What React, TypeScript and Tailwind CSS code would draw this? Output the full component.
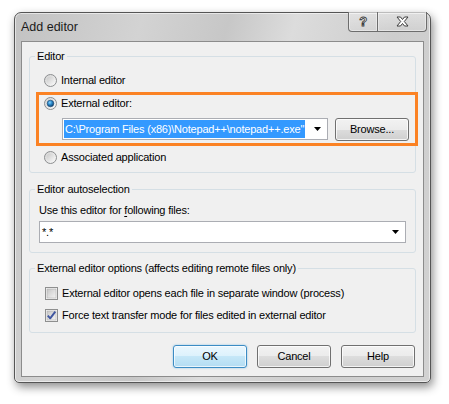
import { useId } from 'react';

function Radio({ checked = false }: { checked?: boolean }) {
    const id = useId();
    return (
        <svg width="13" height="13" viewBox="0 0 13 13" className="shrink-0">
            <defs>
                <linearGradient id={`${id}o`} x1="0" y1="0" x2="1" y2="1">
                    <stop offset="0" stopColor="#d2d2d2" />
                    <stop offset="1" stopColor="#fbfbfb" />
                </linearGradient>
                <linearGradient id={`${id}i`} x1="0" y1="0" x2="1" y2="1">
                    <stop offset="0" stopColor="#c9c9c9" />
                    <stop offset="1" stopColor="#f7f7f7" />
                </linearGradient>
                <radialGradient id={`${id}d`} cx="0.4" cy="0.35" r="0.65">
                    <stop offset="0" stopColor="#8fd3fb" />
                    <stop offset="0.45" stopColor="#2f8fd0" />
                    <stop offset="1" stopColor="#0d3f6e" />
                </radialGradient>
            </defs>
            <circle cx="6.5" cy="6.5" r="6" fill={`url(#${id}o)`} stroke="#8c8e90" />
            <circle cx="6.5" cy="6.5" r="4" fill={`url(#${id}i)`} />
            {checked && <circle cx="6.5" cy="6.5" r="3.3" fill={`url(#${id}d)`} stroke="#1c4a74" strokeWidth="0.6" />}
        </svg>
    );
}

function Checkbox({ checked = false }: { checked?: boolean }) {
    const id = useId();
    return (
        <svg width="13" height="13" viewBox="0 0 13 13" className="shrink-0">
            <defs>
                <linearGradient id={`${id}g`} x1="0" y1="0" x2="1" y2="1">
                    <stop offset="0" stopColor="#c6c6c6" />
                    <stop offset="1" stopColor="#f4f4f4" />
                </linearGradient>
            </defs>
            <rect x="0.5" y="0.5" width="12" height="12" fill="#f4f4f4" stroke="#8e8f8f" />
            <rect x="2" y="2" width="9" height="9" fill={`url(#${id}g)`} stroke="#a9a9a9" strokeWidth="0.5" />
            {checked && (
                <path d="M2.8 6.6 L5.2 9.3 L10.3 2.6" fill="none" stroke="#3f56a0" strokeWidth="1.9" strokeLinejoin="round" />
            )}
        </svg>
    );
}

function DropArrow() {
    return (
        <svg width="7" height="4" viewBox="0 0 7 4" className="shrink-0">
            <path d="M0 0 H7 L3.5 4 Z" fill="#000" />
        </svg>
    );
}

function Btn({ label, primary = false }: { label: string; primary?: boolean }) {
    return (
        <div
            className={`flex h-[23px] w-[74px] items-center justify-center rounded-[3px] border text-black ${
                primary
                    ? 'border-[#3c8cc4] bg-[linear-gradient(#eaf7fe_0%,#dcf1fc_50%,#c5e7f8_50%,#b3dcf2_100%)] shadow-[inset_0_0_0_1px_rgba(255,255,255,0.7),0_0_2px_rgba(60,160,220,0.6)]'
                    : 'border-[#707070] bg-[linear-gradient(#f2f2f2_0%,#ebebeb_50%,#dddddd_50%,#cfcfcf_100%)] shadow-[inset_0_0_0_1px_rgba(255,255,255,0.75)]'
            }`}
        >
            {label}
        </div>
    );
}

function Legend({ children }: { children: React.ReactNode }) {
    return <legend className="ml-[5px] px-[2px] leading-[13px] text-black">{children}</legend>;
}

export default function App() {
    return (
        <div className="h-[404px] w-[449px] bg-white pl-[14px] pt-[12px] font-['Liberation_Sans',Arial,sans-serif] text-[11px] tracking-[-0.2px]">
            {/* Window frame */}
            <div className="flex h-[371px] w-[417px] flex-col rounded-t-[7px] rounded-b-[5px] border border-[#555] bg-[linear-gradient(105deg,#c2c2c2_0%,#d3d3d3_25%,#c7c7c7_42%,#dcdcdc_55%,#cdcdcd_75%,#d2d2d2_100%)] px-[6px] pb-[5px] shadow-[inset_0_0_0_1px_rgba(255,255,255,0.55),2px_4px_10px_rgba(0,0,0,0.45)]">
                {/* Title bar */}
                <div className="flex h-[28px] shrink-0 items-start justify-between">
                    <span className="self-center text-[12.5px] tracking-normal text-[#1a1a1a]">Add editor</span>
                    <div className="-mr-[3px] -mt-[1px] flex h-[20px]">
                        <div className="flex w-[30px] items-center justify-center rounded-bl-[4px] border border-t-0 border-[#6d6d6d] bg-[linear-gradient(rgba(255,255,255,0.35),rgba(255,255,255,0.05))] shadow-[inset_0_0_0_1px_rgba(255,255,255,0.4)]">
                            <span className="text-[13px] font-bold leading-none text-white [-webkit-text-stroke:0.9px_#3c3c3c]">?</span>
                        </div>
                        <div className="-ml-[1px] flex w-[50px] items-center justify-center rounded-br-[4px] border border-t-0 border-[#6d6d6d] bg-[linear-gradient(rgba(255,255,255,0.35),rgba(255,255,255,0.05))] shadow-[inset_0_0_0_1px_rgba(255,255,255,0.4)]">
                            <svg width="13" height="11" viewBox="0 0 13 11">
                                <path
                                    d="M1 1 H4.5 L6.5 3.5 L8.5 1 H12 L8.3 5.5 L12 10 H8.5 L6.5 7.5 L4.5 10 H1 L4.7 5.5 Z"
                                    fill="#fff"
                                    stroke="#3c3c3c"
                                    strokeWidth="1"
                                    strokeLinejoin="round"
                                />
                            </svg>
                        </div>
                    </div>
                </div>

                {/* Client area */}
                <div className="flex flex-1 flex-col border border-[#8c8c8c] bg-[#f0f0f0] px-[7px] pt-[8px] text-black">
                    {/* Editor group */}
                    <fieldset className="rounded-[3px] border border-[#d5dfe5]">
                        <Legend>Editor</Legend>
                        <div className="pb-[8px] pt-[10px]">
                            <div className="ml-[14px] flex h-[14px] items-center gap-[4px]">
                                <Radio />
                                <span>Internal editor</span>
                            </div>
                            <div className="-mr-[3px] ml-[6px] mt-[5px] border-[3px] border-[#fb8224] pb-[2px] pt-[1px]">
                                <div className="ml-[5px] flex h-[14px] items-center gap-[4px]">
                                    <Radio checked />
                                    <span>External editor:</span>
                                </div>
                                <div className="ml-[23px] mt-[8px] flex items-start gap-[7px]">
                                    <div className="flex h-[22px] w-[266px] items-center justify-between border border-[#abadb3] bg-white pl-[1px] pr-[6px]">
                                        <span className="bg-[#3399ff] px-[1px] leading-[18px] text-white">
                                            C:\Program Files (x86)\Notepad++\notepad++.exe"
                                        </span>
                                        <DropArrow />
                                    </div>
                                    <Btn label="Browse..." />
                                </div>
                            </div>
                            <div className="ml-[14px] mt-[4px] flex h-[14px] items-center gap-[4px]">
                                <Radio />
                                <span>Associated application</span>
                            </div>
                        </div>
                    </fieldset>

                    {/* Editor autoselection group */}
                    <fieldset className="mt-[10px] rounded-[3px] border border-[#d5dfe5]">
                        <Legend>Editor autoselection</Legend>
                        <div className="px-[9px] pb-[9px] pt-[8px]">
                            <div className="leading-[13px]">
                                Use this editor for <span className="underline underline-offset-[2px]">f</span>ollowing files:
                            </div>
                            <div className="mt-[4px] flex h-[22px] items-center justify-between border border-[#abadb3] bg-white pl-[2px] pr-[6px]">
                                <span>*.*</span>
                                <DropArrow />
                            </div>
                        </div>
                    </fieldset>

                    {/* External editor options group */}
                    <fieldset className="mt-[9px] rounded-[3px] border border-[#d5dfe5]">
                        <Legend>External editor options (affects editing remote files only)</Legend>
                        <div className="pb-[10px] pt-[12px]">
                            <div className="ml-[15px] flex h-[13px] items-center gap-[4px]">
                                <Checkbox />
                                <span>External editor opens each file in separate window (process)</span>
                            </div>
                            <div className="ml-[15px] mt-[9px] flex h-[13px] items-center gap-[4px]">
                                <Checkbox checked />
                                <span>Force text transfer mode for files edited in external editor</span>
                            </div>
                        </div>
                    </fieldset>

                    {/* Dialog buttons */}
                    <div className="mr-[1px] mt-[12px] flex justify-end gap-[10px]">
                        <Btn label="OK" primary />
                        <Btn label="Cancel" />
                        <Btn label="Help" />
                    </div>
                </div>
            </div>
        </div>
    );
}
